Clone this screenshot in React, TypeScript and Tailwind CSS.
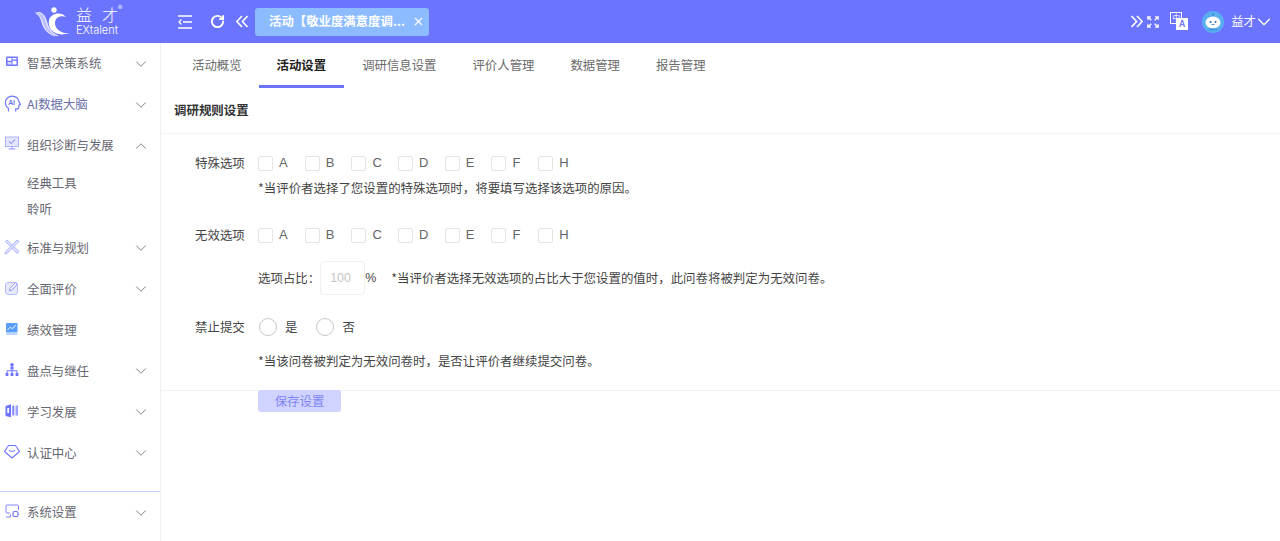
import { ChevronDown, ChevronUp, RotateCw, X } from 'lucide-react'
import type { ReactNode } from 'react'

const CJK = "font-['Noto_Sans_CJK_SC','Noto_Sans',sans-serif]"

function Svg({ children }: { children: ReactNode }) {
  return (
    <svg viewBox="0 0 16 16" className="w-4 h-4 shrink-0" fill="none">
      {children}
    </svg>
  )
}

const icons: Record<string, ReactNode> = {
  board: (
    <Svg>
      <rect x="2" y="2.500" width="12" height="9.500" rx="1.200" fill="#6f77ff" />
      <rect x="3.500" y="4" width="4" height="2.800" fill="#fff" />
      <rect x="8.500" y="4" width="4" height="1.500" fill="#fff" />
      <rect x="8.500" y="6.800" width="4" height="3.700" fill="#fff" />
      <rect x="3.500" y="8" width="4" height="2.500" fill="#d6d9ff" />
    </Svg>
  ),
  ai: (
    <svg viewBox="0 0 16 16" className="w-[17px] h-[17px] shrink-0" fill="none">
      <path d="M4.200 15.500v-3C2.300 11.300 1.300 9.500 1.300 7.300 1.300 3.700 4.200 1 7.800 1c3.300 0 6 2.400 6.300 5.400l1.400 2.600-1.500.6v1.900c0 .9-.6 1.500-1.500 1.500H11v2.500" stroke="#6f77ff" strokeWidth="1.100" />
      <text x="3.900" y="9.800" fontSize="6.500" fontWeight="700" fill="#6f77ff" fontFamily="Liberation Sans, sans-serif">AI</text>
    </svg>
  ),
  monitor: (
    <Svg>
      <rect x="1.500" y="1" width="13" height="9.500" fill="#e4e6ff" stroke="#9ca1ff" strokeWidth="0.800" />
      <path d="M5 5.500l2.200 2L11 3.500" stroke="#6c74ff" strokeWidth="1" />
      <path d="M4.500 13h7M8 10.500V13" stroke="#8f95ff" strokeWidth="1" />
    </Svg>
  ),
  cross: (
    <Svg>
      <path d="M1.500 2.500l1.500-1.500 12 11.500-1.800 2z" fill="#e0e2ff" stroke="#a6abff" strokeWidth="0.900" />
      <path d="M13 1l2 1.500L3.500 14 1 15l.8-2.500z" fill="#e0e2ff" stroke="#a6abff" strokeWidth="0.900" />
    </Svg>
  ),
  edit: (
    <Svg>
      <rect x="1.500" y="2.500" width="12" height="12" rx="2.500" fill="#e8e9ff" stroke="#b0b4ff" strokeWidth="0.900" />
      <path d="M5.500 10.800l.5-2.300 5.500-6 1.800 1.600-5.500 6z" fill="#fff" stroke="#8087ff" strokeWidth="0.900" />
    </Svg>
  ),
  chart: (
    <Svg>
      <rect x="2" y="2" width="11.500" height="9.500" fill="#5b9dff" rx="0.800" />
      <path d="M3.500 9l2.800-2.800 2 1.500 3.700-3.700" stroke="#fff" strokeWidth="0.900" />
      <path d="M2 13h11.500" stroke="#8fbcff" strokeWidth="1.200" />
    </Svg>
  ),
  org: (
    <Svg>
      <circle cx="8" cy="2.800" r="1.800" fill="#6c74ff" />
      <rect x="6.500" y="4.500" width="3" height="3" fill="#6c74ff" />
      <path d="M3 11V8.800h10V11M8 7.500V11" stroke="#6c74ff" strokeWidth="1" />
      <rect x="1.500" y="11" width="3" height="3" rx="0.700" fill="#6c74ff" />
      <rect x="6.500" y="11" width="3" height="3" rx="0.700" fill="#6c74ff" />
      <rect x="11.500" y="11" width="3" height="3" rx="0.700" fill="#6c74ff" />
    </Svg>
  ),
  book: (
    <Svg>
      <path d="M1.500 3l5.500-1.800v13L1.500 13z" fill="#6c74ff" />
      <rect x="3.300" y="5" width="1.800" height="5" fill="#fff" />
      <rect x="8.300" y="2.500" width="2" height="10" fill="#7d84ff" />
      <rect x="11.500" y="2.500" width="2.500" height="10" fill="#9ca1ff" />
    </Svg>
  ),
  badge: (
    <Svg>
      <path d="M4.500 1.500h7l4 6-7.500 6.500L.5 7.500z" stroke="#6f77ff" strokeWidth="1.100" strokeLinejoin="round" />
      <path d="M5 6c1 2 5 2 6 0" stroke="#6f77ff" strokeWidth="1.100" />
    </Svg>
  ),
  system: (
    <Svg>
      <path d="M6 10H3c-.8 0-1-.4-1-1V3c0-.7.4-1 1-1h10.500c.7 0 1 .3 1 1v4" stroke="#8087ff" strokeWidth="1" />
      <path d="M2 14h4.500v-2.500" stroke="#8087ff" strokeWidth="1" />
      <rect x="9" y="8.500" width="5" height="5" rx="1.500" stroke="#6c74ff" strokeWidth="1.200" />
    </Svg>
  ),
}

function MenuItem({ icon, label, open, hasArrow = true }: { icon: string; label: string; open?: boolean; hasArrow?: boolean }) {
  return (
    <div className="h-[41px] flex items-center pl-[4px] pr-[10px]">
      <div className="w-[23px] -mt-[3px]">{icons[icon]}</div>
      <span className="flex-1 text-[12.4px] text-[#666670]">{label}</span>
      {hasArrow &&
        (open ? (
          <ChevronUp className="w-[18px] h-[18px] text-[#808088]" strokeWidth={1.300} />
        ) : (
          <ChevronDown className="w-[18px] h-[18px] text-[#808088]" strokeWidth={1.300} />
        ))}
    </div>
  )
}

function Sidebar() {
  return (
    <aside className="w-[161px] shrink-0 border-r border-[#f0f0f4] flex flex-col h-[498px]">
      <div className="flex-1">
        <MenuItem icon="board" label="智慧决策系统" />
        <div className="[&_span]:text-[#6a6fa8]">
          <MenuItem icon="ai" label="AI数据大脑" />
        </div>
        <MenuItem icon="monitor" label="组织诊断与发展" open />
        <div className="pl-[27px] text-[12.4px] text-[#666670] leading-[26px] mt-[4px]">
          <div className="h-[26px]">经典工具</div>
          <div className="h-[26px]">聆听</div>
        </div>
        <div className="mt-[5.500px]">
          <MenuItem icon="cross" label="标准与规划" />
        </div>
        <MenuItem icon="edit" label="全面评价" />
        <MenuItem icon="chart" label="绩效管理" hasArrow={false} />
        <MenuItem icon="org" label="盘点与继任" />
        <MenuItem icon="book" label="学习发展" />
        <MenuItem icon="badge" label="认证中心" />
      </div>
      <div className="border-t border-[#c9ccff] h-[50px]">
        <MenuItem icon="system" label="系统设置" />
      </div>
    </aside>
  )
}

function Logo() {
  return (
    <div className="w-[161px] shrink-0 flex items-center pl-[34px] relative h-full">
      <svg viewBox="0 0 40 34" className="w-[40px] h-[34px] shrink-0" fill="none">
        <path d="M1 8C6 5 11 9 13 16 15 23 18 28 25 31 16 31 10 26 8 19 6.500 13 5 10 1 8z" fill="#fff" opacity="0.55" />
        <path d="M4 7.500C8 7.500 11 11 12 16 13.500 23 17 28 24 31" stroke="#fff" strokeWidth="0.700" />
        <path d="M1.500 8C5 9.500 7 13 8.500 18 10 24 14 29 21 31" stroke="#fff" strokeWidth="0.700" />
        <path d="M32 12C27 6 17 8 15 15 13 24 22 33 35 28 27 29 21 24 21 18 21 13 26 10 32 12z" fill="#fff" />
        <circle cx="20" cy="5" r="2.700" fill="#fff" />
      </svg>
      <div className="ml-[2px] -mt-[1px] text-white flex flex-col">
        <div className="flex gap-[10px] text-[16px] leading-[17px] font-light whitespace-nowrap">
          <span>益</span>
          <span>才</span>
        </div>
        <div className="mt-[1px] text-[11px] leading-[12px] font-light font-['Inter',sans-serif]">EXtalent</div>
      </div>
      <span className="absolute left-[118px] top-[4px] text-[9px] leading-[10px] text-white/90">®</span>
    </div>
  )
}

function DoubleChevron({ dir }: { dir: 'left' | 'right' }) {
  return (
    <svg viewBox="0 0 12 13" className="w-[12px] h-[13px] shrink-0" fill="none" stroke="#fff" strokeWidth="1.600">
      {dir === 'left' ? <path d="M6 1L.9 6.500 6 12M11.500 1L6.400 6.500 11.500 12" /> : <path d="M6 1l5.100 5.500L6 12M.5 1l5.100 5.500L.5 12" />}
    </svg>
  )
}

function Header() {
  return (
    <header className="h-[43px] bg-[#6b74ff] flex items-center text-white">
      <Logo />
      <svg viewBox="0 0 14 14" className="w-[14px] h-[14px] ml-[17px]" fill="none" stroke="#fff" strokeWidth="1.700">
        <path d="M0 1h14M5 7h9M0 13h14" />
        <path d="M3.500 4.500L1 7l2.500 2.500" strokeWidth="1.200" />
      </svg>
      <RotateCw className="w-[15px] h-[15px] ml-[18px]" strokeWidth={3} />
      <div className="ml-[11px] flex">
        <DoubleChevron dir="left" />
      </div>
      <div className="ml-[7px] w-[174px] h-[28px] bg-[#8cbcff] rounded-[3px] flex items-center pl-[14px] pr-[4px]">
        <span className="flex-1 text-[12.4px] font-bold whitespace-nowrap">活动【敬业度满意度调...</span>
        <X className="w-[13px] h-[13px]" strokeWidth={2} />
      </div>
      <div className="ml-auto flex items-center pr-[5px]">
        <DoubleChevron dir="right" />
        <svg viewBox="0 0 14 14" className="w-[12px] h-[12px] ml-[4px]" fill="none" stroke="#fff" strokeWidth="1.600">
          <path d="M1 4.500V1h3.500M13 4.500V1H9.500M1 9.500V13h3.500M13 9.500V13H9.500" />
          <path d="M1.500 1.500l3.500 3.500M12.500 1.500L9 5M1.500 12.500L5 9M12.500 12.500L9 9" />
        </svg>
        <div className="relative w-[18px] h-[18px] ml-[11px] -mt-[2px]">
          <div className="absolute left-0 top-0 w-[12px] h-[12px] border border-white text-[8px] leading-[10px] text-center">中</div>
          <div className="absolute right-0 bottom-0 w-[12px] h-[12px] bg-white text-[#6b74ff] text-[9px] font-bold leading-[12px] text-center">A</div>
        </div>
        <svg viewBox="0 0 22 22" className="w-[22px] h-[22px] ml-[14px]">
          <circle cx="11" cy="11" r="11" fill="#5aaef0" />
          <path d="M11 2v3" stroke="#3f97e0" strokeWidth="2" />
          <ellipse cx="11" cy="11.500" rx="7.500" ry="6" fill="#fff" />
          <circle cx="8.500" cy="11" r="1" fill="#2d6bb5" />
          <circle cx="13.500" cy="11" r="1" fill="#2d6bb5" />
          <path d="M9.500 13.500h3" stroke="#2d6bb5" strokeWidth="0.800" />
          <path d="M7 18.500h8" stroke="#3f97e0" strokeWidth="2" />
        </svg>
        <span className="ml-[7px] text-[12.4px]">益才</span>
        <ChevronDown className="w-[22px] h-[22px] -ml-[3px]" strokeWidth={1.300} />
      </div>
    </header>
  )
}

function Tabs() {
  return (
    <div className="h-[45px] flex pl-[13px] text-[12.4px]">
      <div className="px-[18px] h-[45px] leading-[44px] text-[#6b6b6b] -mr-[1px]">活动概览</div>
      <div className="px-[18px] h-[45px] leading-[44px] font-bold text-[#222] border-b-[3px] border-[#6b74ff]">活动设置</div>
      {['调研信息设置', '评价人管理', '数据管理', '报告管理'].map(t => (
        <div key={t} className="px-[18px] h-[45px] leading-[44px] text-[#6b6b6b]">
          {t}
        </div>
      ))}
    </div>
  )
}

function CheckGroup() {
  return (
    <div className="flex">
      {['A', 'B', 'C', 'D', 'E', 'F', 'H'].map(o => (
        <label key={o} className="flex items-center w-[46.700px] text-[13px] text-[#666] font-['Liberation_Sans',sans-serif]">
          <span className="w-[15px] h-[15px] border border-[#e4e4e4] rounded-[2px] bg-white" />
          <span className="ml-[6px]">{o}</span>
        </label>
      ))}
    </div>
  )
}

function Radio({ label }: { label: string }) {
  return (
    <label className="flex items-center ml-[1px] mr-[18px]">
      <span className="w-[18px] h-[18px] rounded-full border border-[#c9c9c9] bg-white" />
      <span className="ml-[8px] text-[12.4px] text-[#444]">{label}</span>
    </label>
  )
}

function Form() {
  return (
    <div className="text-[12.45px] text-[#444]">
      <div className="h-[46px] border-b border-[#f5f5f5] flex items-center pl-[13px] font-bold text-[#333]">
        调研规则设置
      </div>
      <div className="pl-[34px] pt-[19px]">
        <div className="flex items-center h-[20px]">
          <div className="w-[63px]">特殊选项</div>
          <CheckGroup />
        </div>
        <div className="pl-[63px] h-[20px] mt-[5px] leading-[20px]">*当评价者选择了您设置的特殊选项时，将要填写选择该选项的原因。</div>
        <div className="flex items-center h-[20px] mt-[27px]">
          <div className="w-[63px]">无效选项</div>
          <CheckGroup />
        </div>
        <div className="flex items-center pl-[63px] h-[34px] mt-[16px]">
          <span>选项占比：</span>
          <div className="w-[45px] h-[34px] border border-[#f0f0f0] rounded-[4px] flex items-center pl-[9px] text-[#c4c4c4] font-['Liberation_Sans',sans-serif] text-[12.4px]">100</div>
          <span className="w-[26px] font-['Liberation_Sans',sans-serif]">%</span>
          <span>*当评价者选择无效选项的占比大于您设置的值时，此问卷将被判定为无效问卷。</span>
        </div>
        <div className="flex items-center h-[20px] mt-[22px]">
          <div className="w-[63px]">禁止提交</div>
          <Radio label="是" />
          <Radio label="否" />
        </div>
        <div className="pl-[63px] h-[20px] mt-[14px] leading-[20px]">*当该问卷被判定为无效问卷时，是否让评价者继续提交问卷。</div>
      </div>
      <div className="border-t border-[#f2f2f2] mt-[19px] pl-[97px]">
        <button className="block -mt-[1px] w-[83px] h-[22px] bg-[#d0d2ff] rounded-[3px] text-[#7e85f5] text-[12.4px] leading-[22px]">保存设置</button>
      </div>
    </div>
  )
}

export default function App() {
  return (
    <div className={`w-[1280px] h-[541px] overflow-hidden bg-white ${CJK}`}>
      <Header />
      <div className="flex">
        <Sidebar />
        <main className="flex-1 min-w-0">
          <Tabs />
          <Form />
        </main>
      </div>
    </div>
  )
}
